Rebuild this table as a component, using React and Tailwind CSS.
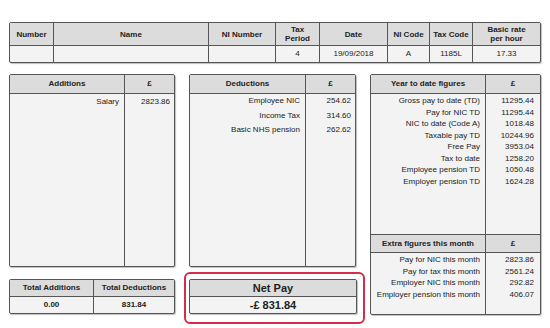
import React from 'react';

const FONT = { fontFamily: '"Liberation Sans", Arial, sans-serif' };

const topCols = [
  { w: 'w-[44px]', head: ['Number'], val: '' },
  { w: 'w-[155px]', head: ['Name'], val: '' },
  { w: 'w-[67px]', head: ['NI Number'], val: '' },
  { w: 'w-[44px]', head: ['Tax', 'Period'], val: '4' },
  { w: 'w-[68px]', head: ['Date'], val: '19/09/2018' },
  { w: 'w-[42px]', head: ['NI Code'], val: 'A' },
  { w: 'w-[43px]', head: ['Tax Code'], val: '1185L' },
  { w: 'w-[69px]', head: ['Basic rate', 'per hour'], val: '17.33' },
];

const deductions = [
  ['Employee NIC', '254.62'],
  ['Income Tax', '314.60'],
  ['Basic NHS pension', '262.62'],
];

const ytd = [
  ['Gross pay to date (TD)', '11295.44'],
  ['Pay for NIC TD', '11295.44'],
  ['NIC to date (Code A)', '1018.48'],
  ['Taxable pay TD', '10244.96'],
  ['Free Pay', '3953.04'],
  ['Tax to date', '1258.20'],
  ['Employee pension TD', '1050.48'],
  ['Employer pension TD', '1624.28'],
];

const extra = [
  ['Pay for NIC this month', '2823.86'],
  ['Pay for tax this month', '2561.24'],
  ['Employer NIC this month', '292.82'],
  ['Employer pension this month', '406.07'],
];

const boxCls =
  'border border-[#555] rounded-[2px] bg-[#f3f3f3] shadow-[1px_1px_1px_rgba(0,0,0,0.25)] overflow-hidden';

const ListBox = ({ title, rows, leftW, rightW, leading }) => (
  <div className={`${boxCls} flex flex-col h-[193px]`}>
    <div className="flex h-[19px] bg-[#dcdcdc] border-b border-[#555] font-bold">
      <div className={`${leftW} border-r border-[#555] flex items-center justify-center`}>{title}</div>
      <div className="flex-1 flex items-center justify-center">£</div>
    </div>
    <div className="flex flex-1">
      <div className={`${leftW} border-r border-[#555] pr-[5px] text-right`}>
        {rows.map(([k]) => (
          <div key={k} className={leading}>{k}</div>
        ))}
      </div>
      <div className="flex-1 pr-[4px] text-right">
        {rows.map(([k, v]) => (
          <div key={k} className={leading}>{v}</div>
        ))}
      </div>
    </div>
  </div>
);

const YtdSection = ({ title, rows, grow, head }) => (
  <>
    <div className={`flex ${head} bg-[#dcdcdc] border-b border-[#555] font-bold`}>
      <div className="w-[115px] border-r border-[#555] flex items-center justify-center">{title}</div>
      <div className="flex-1 flex items-center justify-center">£</div>
    </div>
    <div className={`flex ${grow}`}>
      <div className="w-[115px] border-r border-[#555] pr-[5px] pt-[1px] text-right">
        {rows.map(([k]) => (
          <div key={k} className="leading-[11.5px]">{k}</div>
        ))}
      </div>
      <div className="flex-1 pr-[6px] pt-[1px] text-right">
        {rows.map(([k, v]) => (
          <div key={k} className="leading-[11.5px]">{v}</div>
        ))}
      </div>
    </div>
  </>
);

export default function App() {
  return (
    <div className="w-[550px] h-[328px] bg-white text-[8px] text-[#222] pl-[9px] pt-[22px]" style={FONT}>
      <div className={`${boxCls} w-[532px] bg-[#f3f3f3]`}>
        <div className="flex h-[23px] bg-[#dcdcdc] border-b border-[#555] font-bold">
          {topCols.map((c, i) => (
            <div
              key={i}
              className={`${c.w} flex flex-col items-center justify-center leading-[9px] text-center ${i < topCols.length - 1 ? 'border-r border-[#555]' : 'flex-1'}`}
            >
              {c.head.map((h) => (
                <span key={h}>{h}</span>
              ))}
            </div>
          ))}
        </div>
        <div className="flex h-[16px]">
          {topCols.map((c, i) => (
            <div
              key={i}
              className={`${c.w} flex items-center justify-center ${i < topCols.length - 1 ? 'border-r border-[#555]' : 'flex-1'}`}
            >
              {c.val}
            </div>
          ))}
        </div>
      </div>

      <div className="flex gap-[14px] mt-[11px]">
        <div className="w-[166px] flex flex-col">
          <ListBox title="Additions" rows={[['Salary', '2823.86']]} leftW="w-[115px]" leading="leading-[13px] pt-[1px]" />
          <div className={`${boxCls} mt-[12px] h-[35px] flex flex-col`}>
            <div className="flex h-[17px] bg-[#dcdcdc] border-b border-[#555] font-bold">
              <div className="w-[84px] border-r border-[#555] flex items-center justify-center">Total Additions</div>
              <div className="flex-1 flex items-center justify-center">Total Deductions</div>
            </div>
            <div className="flex flex-1 font-bold">
              <div className="w-[84px] border-r border-[#555] flex items-center justify-center">0.00</div>
              <div className="flex-1 flex items-center justify-center">831.84</div>
            </div>
          </div>
        </div>

        <div className="w-[167px] flex flex-col">
          <ListBox title="Deductions" rows={deductions} leftW="w-[116px]" leading="leading-[14.5px]" />
          <div className="mt-[5px] ml-[-5px] mr-[-9px] border-2 border-[#d22d4a] rounded-[6px] pl-[3px] pr-[6px] pt-[5px] pb-[8px]">
            <div className={`${boxCls} h-[35px] flex flex-col text-[11px] font-bold`}>
              <div className="h-[17px] bg-[#dcdcdc] border-b border-[#555] flex items-center justify-center">Net Pay</div>
              <div className="flex-1 flex items-center justify-center">-£ 831.84</div>
            </div>
          </div>
        </div>

        <div className={`${boxCls} w-[171px] h-[241px] flex flex-col`}>
          <YtdSection title="Year to date figures" rows={ytd} head="h-[19px]" grow="h-[140px]" />
          <div className="border-t border-[#555]" />
          <YtdSection title="Extra figures this month" rows={extra} head="h-[18px]" grow="flex-1" />
        </div>
      </div>
    </div>
  );
}
